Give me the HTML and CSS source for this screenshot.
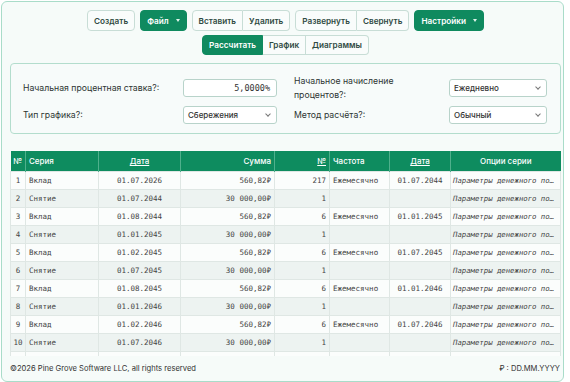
FILE: index.html
```html
<!DOCTYPE html>
<html lang="ru">
<head>
    <meta charset="UTF-8">
    <meta name="viewport" content="width=device-width, initial-scale=1.0">
    <title>Калькулятор</title>
    <link rel="stylesheet" href="styles.css">
</head>
<body>
    <div class="app">
        <div class="toolbar">
            <div class="tool-row">
                <button class="btn">Создать</button>
                <button class="btn btn-green">Файл <span class="caret"></span></button>
                <div class="btn-group">
                    <button class="btn">Вставить</button>
                    <button class="btn">Удалить</button>
                </div>
                <div class="btn-group">
                    <button class="btn">Развернуть</button>
                    <button class="btn">Свернуть</button>
                </div>
                <button class="btn btn-green">Настройки <span class="caret"></span></button>
            </div>
            <div class="tool-row">
                <div class="btn-group">
                    <button class="btn btn-green">Рассчитать</button>
                    <button class="btn">График</button>
                    <button class="btn">Диаграммы</button>
                </div>
            </div>
        </div>

        <div class="panel">
            <label class="field-label">Начальная процентная ставка?:</label>
            <div class="input">5,0000%</div>
            <div></div>
            <label class="field-label narrow">Начальное начисление процентов?:</label>
            <div class="select">Ежедневно <span class="chev"></span></div>

            <label class="field-label">Тип графика?:</label>
            <div class="select">Сбережения <span class="chev"></span></div>
            <div></div>
            <label class="field-label">Метод расчёта?:</label>
            <div class="select">Обычный <span class="chev"></span></div>
        </div>

        <div class="table-wrap">
            <table class="grid">
                <colgroup>
                    <col style="width:15px"><col style="width:73px"><col style="width:82px"><col style="width:94px">
                    <col style="width:55px"><col style="width:60px"><col style="width:61px"><col style="width:110px">
                </colgroup>
                <thead>
                    <tr>
                        <th class="c num">№</th>
                        <th>Серия</th>
                        <th class="c"><u>Дата</u></th>
                        <th class="r">Сумма</th>
                        <th class="r"><u>№</u></th>
                        <th>Частота</th>
                        <th class="c"><u>Дата</u></th>
                        <th class="c">Опции серии</th>
                    </tr>
                </thead>
                <tbody id="rows"></tbody>
            </table>
        </div>

        <footer class="footer">
            <span>©2026 Pine Grove Software LLC, all rights reserved</span>
            <span>₽ : DD.MM.YYYY</span>
        </footer>
    </div>

    <script>
        const rows = [
            [1, 'Вклад', '01.07.2026', '560,82₽', 217, 'Ежемесячно', '01.07.2044'],
            [2, 'Снятие', '01.07.2044', '30 000,00₽', 1, '', ''],
            [3, 'Вклад', '01.08.2044', '560,82₽', 6, 'Ежемесячно', '01.01.2045'],
            [4, 'Снятие', '01.01.2045', '30 000,00₽', 1, '', ''],
            [5, 'Вклад', '01.02.2045', '560,82₽', 6, 'Ежемесячно', '01.07.2045'],
            [6, 'Снятие', '01.07.2045', '30 000,00₽', 1, '', ''],
            [7, 'Вклад', '01.08.2045', '560,82₽', 6, 'Ежемесячно', '01.01.2046'],
            [8, 'Снятие', '01.01.2046', '30 000,00₽', 1, '', ''],
            [9, 'Вклад', '01.02.2046', '560,82₽', 6, 'Ежемесячно', '01.07.2046'],
            [10, 'Снятие', '01.07.2046', '30 000,00₽', 1, '', '']
        ];
        const body = document.getElementById('rows');
        rows.forEach(r => {
            const tr = document.createElement('tr');
            tr.innerHTML =
                '<td class="c num">' + r[0] + '</td>' +
                '<td>' + r[1] + '</td>' +
                '<td class="c">' + r[2] + '</td>' +
                '<td class="r">' + r[3] + '</td>' +
                '<td class="r">' + r[4] + '</td>' +
                '<td>' + r[5] + '</td>' +
                '<td class="c">' + r[6] + '</td>' +
                '<td class="opt">Параметры денежного по…</td>';
            body.appendChild(tr);
        });
        // next row is scrolled out of view, only its top edge shows
        const stub = document.createElement('tr');
        stub.innerHTML = '<td></td>'.repeat(8);
        body.appendChild(stub);
    </script>
</body>
</html>
```

FILE: styles.css
```css
body {
    margin: 0;
    padding: 1px 0 0 1px;
    background: #fff;
    font-family: Inter, "Noto Sans", sans-serif;
    color: #2d3a36;
}
.app {
    box-sizing: border-box;
    width: 563px;
    height: 381px;
    border: 1px solid #a9dcc9;
    border-radius: 6px;
    background: #f6fbf9;
    padding: 0 2px 0 8px;
    display: flex;
    flex-direction: column;
    overflow: hidden;
}
.toolbar {
    display: flex;
    flex-direction: column;
    align-items: center;
    gap: 4px;
    padding-top: 8px;
}
.tool-row {
    display: flex;
    gap: 5px;
}
.btn {
    height: 21px;
    padding: 0 6px;
    font-family: inherit;
    font-size: 8.2px;
    font-weight: 600;
    color: #2f4a42;
    background: #f9fcfb;
    border: 1px solid #c8ddd6;
    border-radius: 4px;
    display: flex;
    align-items: center;
    gap: 4px;
}
.btn-green {
    background: #0f8a5f;
    border-color: #0f8a5f;
    color: #fff;
}
.caret {
    width: 0;
    height: 0;
    border-left: 2.5px solid transparent;
    border-right: 2.5px solid transparent;
    border-top: 3px solid #dff3ea;
    margin-left: 3px;
}
.btn-group {
    display: flex;
}
.btn-group .btn {
    border-radius: 0;
}
.btn-group .btn + .btn {
    border-left: none;
}
.btn-group .btn:first-child {
    border-radius: 4px 0 0 4px;
}
.btn-group .btn:last-child {
    border-radius: 0 4px 4px 0;
}
.tool-row:last-child .btn {
    height: 20px;
}

.panel {
    margin-top: 8px;
    border: 1px solid #b3ddcd;
    border-radius: 4px;
    background: #f7fbfa;
    padding: 10px 11px 9px 12px;
    display: grid;
    grid-template-columns: 160px 94px 17px 155px 98px;
    grid-template-rows: 28px 18px;
    row-gap: 4px;
    align-items: center;
}
.field-label {
    font-size: 8.7px;
    line-height: 14px;
    color: #2d3532;
}
.field-label.narrow {
    max-width: 110px;
}
.input,
.select {
    height: 18px;
    box-sizing: border-box;
    border: 1px solid #b8d3ca;
    border-radius: 3px;
    background: #fff;
    font-family: "DejaVu Sans Mono", monospace;
    font-size: 8px;
    color: #333;
    display: flex;
    align-items: center;
}
.input {
    justify-content: flex-end;
    padding-right: 6px;
    font-size: 8.5px;
}
.select {
    justify-content: space-between;
    padding: 0 6px 0 4px;
    font-family: Inter, sans-serif;
    font-weight: 500;
}
.chev {
    width: 3px;
    height: 3px;
    border-right: 1px solid #777;
    border-bottom: 1px solid #777;
    transform: rotate(45deg);
    margin-top: -3px;
}

.table-wrap {
    margin-top: 17px;
    height: 205px;
    overflow: hidden;
    flex-shrink: 0;
}
.grid {
    width: 550px;
    border-collapse: collapse;
    table-layout: fixed;
}
.grid th {
    height: 20px;
    background: #0e8c5f;
    color: #fff;
    font-size: 8px;
    font-weight: 500;
    text-align: left;
    padding: 0 3px;
    border-left: 1px solid #4fb08c;
}
.grid th:first-child {
    border-left: none;
}
.grid td {
    height: 17px;
    padding: 0 3px;
    font-family: "DejaVu Sans Mono", monospace;
    font-size: 7.5px;
    color: #444;
    border: 1px solid #dfe7e4;
    white-space: nowrap;
    overflow: hidden;
}
.grid .num {
    padding: 0;
}
.grid tbody tr:nth-child(odd) {
    background: #fbfdfc;
}
.grid tbody tr:nth-child(even) {
    background: #edf3f1;
}
.grid .c {
    text-align: center;
}
.grid .r {
    text-align: right;
}
.grid .opt {
    font-style: italic;
    font-size: 7.3px;
    padding: 0 2px;
}

.footer {
    flex: 1;
    display: flex;
    justify-content: space-between;
    align-items: center;
    font-size: 7.6px;
    color: #333;
    padding-right: 1px;
}
```
